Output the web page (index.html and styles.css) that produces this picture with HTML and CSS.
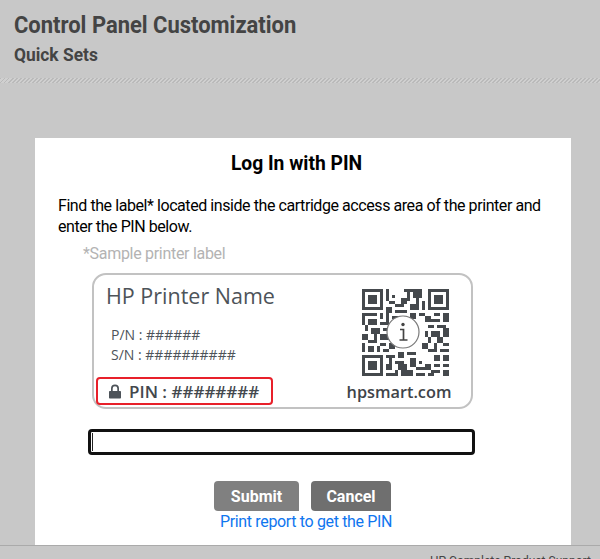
FILE: index.html
```html
<!DOCTYPE html>
<html lang="en">
<head>
<meta charset="utf-8">
<title>Log In with PIN</title>
<link rel="stylesheet" href="styles.css">
</head>
<body>
<header class="page-head">
  <h1>Control Panel Customization</h1>
  <h2>Quick Sets</h2>
</header>
<div class="rule"></div>
<main class="dialog">
  <h3>Log In with PIN</h3>
  <p class="intro">Find the label* located inside the cartridge access area of the printer and enter the PIN below.</p>
  <p class="sample">*Sample printer label</p>
  <section class="label">
    <div class="label-left">
      <div class="name">HP Printer Name</div>
      <div class="codes"><div>P/N : ######</div><div>S/N : ##########</div></div>
      <div class="pin">
        <svg class="lock" viewBox="0 0 14 15" width="14" height="15"><path fill="#4d5359" d="M3 7V4.600a4 4 0 0 1 8 0V7h1.200c.5 0 .8.3.8.8v5.900c0 .5-.3.8-.8.8H1.800c-.5 0-.8-.3-.8-.8V7.800c0-.5.3-.8.8-.8zm1.700 0h4.600V4.600a2.300 2.300 0 0 0-4.600 0z"/></svg>
        <span>PIN : ########</span>
      </div>
    </div>
    <div class="label-right">
      <svg class="qr" viewBox="0 0 29 29" width="87" height="87" shape-rendering="crispEdges">
        <path fill="#45494d" fill-rule="evenodd" d="M0 0h7v7H0zM1 1v5h5V1zM2 2h3v3H2zM22 0h7v7h-7zM23 1v5h5V1zM24 2h3v3h-3zM0 22h7v7H0zM1 23v5h5v-5zM2 24h3v3H2z"/>
        <path fill="#45494d" d="M8 0h1v4H8zM10 2h1v1h-1zM9 4h2v1H9zM8 6h2v2H8zM14 0h6v1h-6zM15 1h1v3h-1zM17 1h3v2h-3zM13 3h2v2h-2zM18 3h1v2h-1zM11 5h3v1h-3zM16 5h3v2h-3zM11 7h4v1h-4zM20 4h1v3h-1zM16 8h2v2h-2zM19 8h2v1h-2zM10 9h3v1h-3zM14 9h1v2h-1zM8 8h1v3H8zM11 10h2v2h-2z"/>
        <path fill="#45494d" d="M0 8h5v1H0zM6 8h1v2H6zM0 9h1v3H0zM2 10h3v2H2zM6 11h3v1H6zM1 12h1v2H1zM3 13h3v2H3zM7 13h3v1H7zM0 15h2v2H0zM4 15h1v3H4zM6 15h3v2H6zM2 17h2v1H2zM0 18h1v3H0zM6 18h2v1H6zM2 19h2v2H2zM5 19h1v2H5zM7 20h2v1H7zM9 18h2v2H9z"/>
        <path fill="#45494d" d="M21 9h2v2h-2zM24 8h2v1h-2zM27 8h2v3h-2zM23 10h3v1h-3zM22 12h2v1h-2zM25 12h3v1h-3zM21 14h1v2h-1zM23 14h3v2h-3zM27 13h2v3h-2zM22 16h1v2h-1zM25 16h2v2h-2zM20 18h2v2h-2zM24 18h1v3h-1zM27 18h2v1h-2zM26 20h3v1h-3zM22 20h2v1h-2z"/>
        <path fill="#45494d" d="M8 22h3v1H8zM9 23h1v2H9zM12 21h2v2h-2zM15 21h3v1h-3zM11 24h3v1h-3zM16 23h2v3h-2zM8 25h2v2H8zM12 25h3v2h-3zM19 24h1v1h-1zM24 22h2v2h-2zM27 22h2v2h-2zM24 25h2v1h-2zM21 25h2v2h-2zM27 25h2v1h-2zM8 28h3v1H8zM11 27h1v2h-1zM13 27h4v2h-4zM18 26h3v1h-3zM18 28h3v1h-3zM23 27h3v1h-3zM22 28h2v1h-2zM27 27h2v2h-2z"/>
      </svg>
      <svg class="info" viewBox="0 0 34 34" width="34" height="34">
        <circle cx="17" cy="17" r="16" fill="#fff" stroke="#7a7a7a" stroke-width="1.200"/>
        <circle cx="17" cy="9.500" r="1.700" fill="#444"/>
        <path d="M14 14.500h3.500v10M13.500 25h8" fill="none" stroke="#444" stroke-width="1.700"/>
      </svg>
      <div class="site">hpsmart.com</div>
    </div>
  </section>
  <div class="field">
    <input class="pin-input" type="text" aria-label="PIN">
    <span class="caret"></span>
  </div>
  <div class="actions">
    <button class="btn btn-submit" type="button">Submit</button>
    <button class="btn btn-cancel" type="button">Cancel</button>
  </div>
  <a class="report" href="#">Print report to get the PIN</a>
</main>
<footer class="foot">HP Complete Product Support</footer>
</body>
</html>
```
FILE: styles.css
```css
* { box-sizing: border-box; }
html, body { height: 100%; }
body {
  margin: 0;
  height: 559px;
  overflow: hidden;
  background: #c8c8c8;
  font-family: "Roboto", sans-serif;
  color: #000;
  display: flex;
  flex-direction: column;
}
.page-head { padding: 12px 14px 0; height: 78px; flex: none; color: #444; }
.page-head h1 {
  margin: 0;
  font-size: 24px;
  line-height: 27px;
  font-weight: 700;
  white-space: nowrap;
  transform: scaleX(.915);
  transform-origin: left center;
}
.page-head h2 {
  margin: 4px 0 0;
  font-size: 18px;
  line-height: 24px;
  font-weight: 700;
  transform: scaleX(.965);
  transform-origin: left center;
}
.rule {
  height: 5px;
  flex: none;
  background: repeating-linear-gradient(135deg, #bababa 0 1.41px, #d0d0d0 1.41px 2.83px);
}
.dialog {
  margin: 55px 0 0 35px;
  width: 536px;
  height: 407px;
  background: #fff;
  padding: 12px 24px 0;
  display: flex;
  flex-direction: column;
  flex: none;
}
.dialog h3 {
  margin: 0 13px 0 0;
  text-align: center;
  font-size: 21px;
  line-height: 26px;
  font-weight: 700;
  transform: scaleX(.917);
}
.intro { margin: 19px 0 0 -1px; font-size: 16px; line-height: 21px; width: 490px; letter-spacing: -.43px; }
.sample { margin: 7px 0 0 24px; font-size: 16px; line-height: 20px; color: #b3b3b3; letter-spacing: -.3px; }
.label {
  margin: 9px 0 0 33px;
  width: 381px;
  height: 136px;
  flex: none;
  border: 2px solid #c2c2c2;
  border-radius: 14px;
  display: flex;
  color: #4d5359;
  font-family: "Open Sans", sans-serif;
}
.label-left { width: 240px; padding: 6px 0 0 12px; display: flex; flex-direction: column; }
.name { font-size: 21.500px; line-height: 30px; white-space: nowrap; }
.codes { margin: 14px 0 0 5px; font-size: 14px; line-height: 20px; }
.pin {
  margin: 12px 0 0 -10px;
  width: 177px;
  height: 28px;
  flex: none;
  border: 2px solid #e8202a;
  border-radius: 4px;
  display: flex;
  align-items: center;
  gap: 7px;
  padding-left: 10px;
  font-size: 17px;
  font-weight: 600;
  color: #43484d;
  white-space: nowrap;
}
.label-right { position: relative; width: 128px; padding: 14px 0 0 28px; }
.qr { display: block; }
.info { position: absolute; left: 52px; top: 40px; }
.site {
  margin: 6px 0 0 -27px;
  width: 128px;
  font-size: 16.300px;
  line-height: 20px;
  font-weight: 600;
  color: #3f4449;
  text-align: center;
}
.field { position: relative; margin: 20px 0 0 29px; width: 387px; height: 26px; flex: none; }
.pin-input {
  display: block;
  width: 100%;
  height: 100%;
  border: 3px solid #111;
  border-radius: 4px;
  background: #fff;
  outline: none;
}
.caret { position: absolute; left: 4px; top: 4px; width: 1px; height: 18px; background: #222; }
.actions { margin: 26px 0 0 155px; display: flex; gap: 12px; flex: none; }
.btn {
  height: 30px;
  border: 0;
  border-radius: 4px 4px 0 4px;
  color: #fff;
  font-family: inherit;
  font-size: 16px;
  font-weight: 700;
  padding: 0;
}
.btn-submit { width: 85px; background: #808080; }
.btn-cancel { width: 80px; background: #6f6f6f; }
.report {
  margin: 2px 0 0 161px;
  font-size: 16px;
  line-height: 18px;
  color: #0f76ef;
  text-decoration: none;
  letter-spacing: -.35px;
}
.foot {
  position: absolute;
  left: 0;
  right: 0;
  top: 545px;
  height: 14px;
  border-top: 1px solid #aaa;
  z-index: -1;
  padding: 8px 0 0 430px;
  font-size: 12px;
  line-height: 14px;
  white-space: nowrap;
  overflow: hidden;
  color: #444;
}
```
